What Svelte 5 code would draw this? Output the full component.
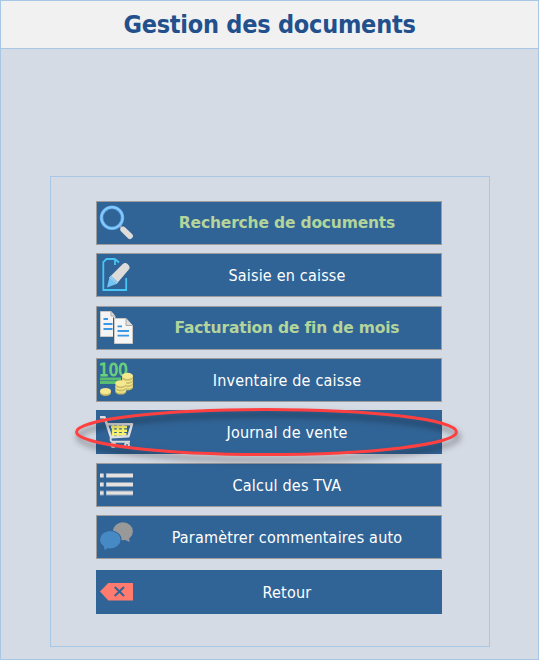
<script>
  const items = [
    { icon: 'search', label: 'Recherche de documents', strong: true, gap: 0 },
    { icon: 'edit', label: 'Saisie en caisse', gap: 8 },
    { icon: 'copy', label: 'Facturation de fin de mois', strong: true, gap: 9 },
    { icon: 'cash', label: 'Inventaire de caisse', gap: 8 },
    { icon: 'cart', label: 'Journal de vente', flat: true, marked: true, gap: 8 },
    { icon: 'list', label: 'Calcul des TVA', gap: 9 },
    { icon: 'chat', label: 'Paramètrer commentaires auto', gap: 8 },
    { icon: 'back', label: 'Retour', flat: true, gap: 11 }
  ];
</script>

{#snippet coins(x, y, n)}
  {#each Array(n) as _, i}
    <ellipse cx={x} cy={y - i * 3.2 + 1.8} rx="5.5" ry="3.1" fill="#c9bd69" />
    <ellipse cx={x} cy={y - i * 3.2} rx="5.5" ry="3.1" fill="#f5e88e" />
  {/each}
{/snippet}

<div class="window">
  <header><h1>Gestion des documents</h1></header>
  <main>
    <nav>
      {#each items as item}
        <button class:strong={item.strong} class:flat={item.flat} style:margin-top="{item.gap}px">
          <svg class="icon" viewBox="0 0 33 33" fill="none">
            {#if item.icon === 'search'}
              <circle cx="12" cy="11.8" r="10.5" stroke="#559bd8" stroke-width="3.6" />
              <circle cx="12" cy="11.8" r="10.6" stroke="#84c9ff" stroke-width="2.2" />
              <path d="M20 20l3 3" stroke="#9aa9b8" stroke-width="2" />
              <path d="M23.2 23.5l6.8 6.6" stroke="#dedbd9" stroke-width="5.8" stroke-linecap="round" />
            {:else if item.icon === 'edit'}
              <path d="M15 1H6.5L3.3 4.200V32H26.200V20M15 1l4 3.500M15 1v6" stroke="#48c4f5" stroke-width="1.8" />
              <path d="M7 29.500l2.500-10.500 7 7z" fill="#71c5f5" />
              <path d="M9.300 19.500L22.800 6q2.500-2.200 5.200.4t.8 5.200L16.500 26z" fill="#dedcda" />
              <path d="M9.300 19.500l1.800-1.900 7.200 6.300-1.800 2.100z" fill="#8fc9ed" />
            {:else if item.icon === 'copy'}
              <path d="M.5.5h10.500l4 4.500v20.500H.5z" fill="#f4f4f4" stroke="#cac8c5" />
              <path d="M11 .5v4.500h4" stroke="#aaa9a7" fill="#ddd" />
              <path d="M3.500 8h4.500M3.500 13h9M3.500 18h9" stroke="#3c98e2" stroke-width="1.8" />
              <path d="M13.500 6.500V33" stroke="#316496" stroke-width="1" />
              <path d="M14.500 7.500h11.500l6.500 7v18h-18z" fill="#f6f6f6" stroke="#cac8c5" />
              <path d="M26 7.500v7h6.500" fill="#ddd" stroke="#aaa9a7" />
              <path d="M17.500 15.300h4.500M17.500 20h11.500M17.500 24.700h11.500" stroke="#3c98e2" stroke-width="1.8" />
            {:else if item.icon === 'cash'}
              <text x="-1" y="13.200" textLength="29" lengthAdjust="spacingAndGlyphs" font-size="17" font-family="'DejaVu Sans', sans-serif" fill="#6bd17b" stroke="#6bd17b" stroke-width=".9">100</text>
              <path d="M0 16h21M0 19.500h18" stroke="#59bd72" stroke-width="2.800" />
              {@render coins(27.500, 22.500, 4)}
              {@render coins(20.800, 26.700, 3)}
              {@render coins(5.500, 28, 1)}
            {:else if item.icon === 'cart'}
              <path d="M11 12h16M12 15.700h15M12.500 19.300h14" stroke="#f7f16c" stroke-width="2.600" />
              <path d="M13 10v11M18 10v11M23 10v11" stroke="#f7f16c" stroke-width="2.400" />
              <path d="M0 2.200h4.500L11 22.200l17.500-1L32 9.200H7.500" stroke="#dedee1" stroke-width="2.500" stroke-linejoin="round" />
              <path d="M11 22.500q-1.500 4 2 4.300h17" stroke="#d9d9dc" stroke-width="2" />
              <circle cx="13.300" cy="30" r="1.900" stroke="#d9d9dc" stroke-width="2" />
              <circle cx="27" cy="30" r="1.900" stroke="#d9d9dc" stroke-width="2" />
            {:else if item.icon === 'list'}
              {#each [7.500, 16.500, 25] as y}
                <path d="M0 {y}h3.700M6 {y}h27" stroke="#8aa2be" stroke-width="5" />
                <path d="M0 {y}h3.500M6.500 {y}h26.500" stroke="#e5e1df" stroke-width="3" />
              {/each}
            {:else if item.icon === 'chat'}
              <ellipse cx="22.900" cy="11.300" rx="10" ry="9" fill="#999" />
              <path d="M23 19l6.700 3-1-6z" fill="#999" />
              <ellipse cx="10.500" cy="19.700" rx="11" ry="9.500" fill="#316496" />
              <ellipse cx="10.300" cy="19.700" rx="10.300" ry="8.700" fill="#4789c4" />
              <path d="M4 25l.3 5 6-3z" fill="#4789c4" />
            {:else}
              <path d="M0 16.500L8.300 8H33v17.500H8.300z" fill="#ff7b70" />
              <path d="M14.700 12l9.300 9M24 12l-9.300 9" stroke="#316496" stroke-width="2" />
            {/if}
          </svg>
          <span>{item.label}</span>
          {#if item.marked}
            <svg class="mark" viewBox="0 0 400 64" fill="none">
              <ellipse cx="199.500" cy="30" rx="190" ry="22.500" stroke="#ff4040" stroke-width="3" />
            </svg>
          {/if}
        </button>
      {/each}
    </nav>
  </main>
</div>

<style>
  .window {
    box-sizing: border-box;
    width: 539px;
    height: 660px;
    border: 1px solid #a8c6e5;
    background: #d5dbe5;
    font-family: 'DejaVu Sans Condensed', 'DejaVu Sans', sans-serif;
    font-stretch: condensed;
  }
  header {
    display: flex;
    align-items: center;
    justify-content: center;
    height: 47px;
    border-bottom: 1px solid #a8c6e5;
    background: #f1f1f1;
  }
  h1 {
    margin: 0;
    font-size: 25px;
    line-height: 1;
    letter-spacing: -0.24px;
    color: #22508c;
    white-space: nowrap;
  }
  main {
    display: flex;
    padding: 127px 0 0 49px;
  }
  nav {
    box-sizing: border-box;
    display: flex;
    flex-direction: column;
    width: 440px;
    height: 471px;
    padding: 24px 47px 0 45px;
    border: 1px solid #a8c6e5;
  }
  button {
    position: relative;
    box-sizing: border-box;
    display: flex;
    flex: none;
    align-items: center;
    height: 44px;
    padding: 0 0 0 3px;
    border: 1px solid #9c9c9c;
    background: #316496;
    color: #fff;
    font: inherit;
    font-size: 16px;
    letter-spacing: 0.2px;
    font-variant-ligatures: none;
  }
  .flat {
    border-color: #316496;
  }
  .strong {
    color: #b3d59b;
    font-family: 'DejaVu Sans', sans-serif;
    font-stretch: normal;
    font-weight: bold;
    font-size: 15.5px;
    letter-spacing: -0.18px;
  }
  .icon {
    flex: none;
    width: 33px;
    height: 33px;
    margin-bottom: 1px;
    overflow: visible;
  }
  span {
    flex: 1;
    text-align: center;
    white-space: nowrap;
  }
  .mark {
    position: absolute;
    z-index: 1;
    left: -30px;
    top: -9px;
    width: 400px;
    height: 64px;
    filter: drop-shadow(2px 5px 3px rgba(0, 0, 0, 0.5));
    pointer-events: none;
  }
</style>
